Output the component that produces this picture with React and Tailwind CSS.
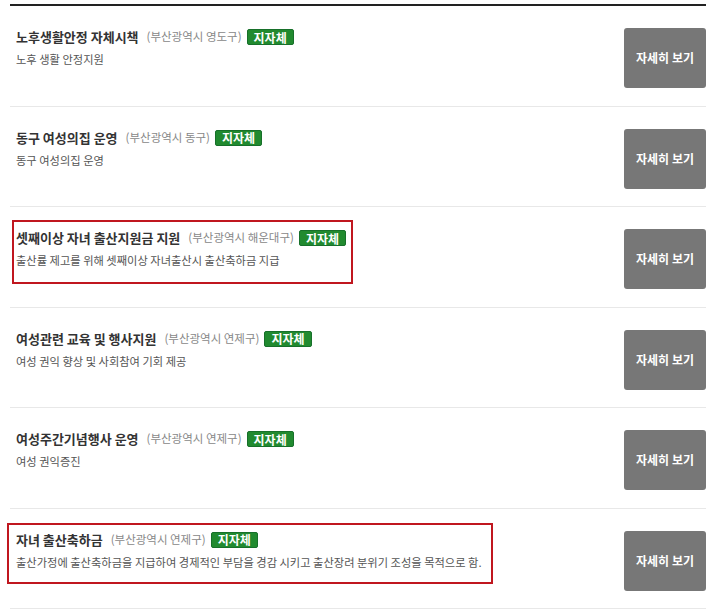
import React from "react";

const items = [
  { title: "노후생활안정 자체시책", region: "(부산광역시 영도구)", desc: "노후 생활 안정지원" },
  { title: "동구 여성의집 운영", region: "(부산광역시 동구)", desc: "동구 여성의집 운영" },
  {
    title: "셋째이상 자녀 출산지원금 지원",
    region: "(부산광역시 해운대구)",
    desc: "출산률 제고를 위해 셋째이상 자녀출산시 출산축하금 지급",
    mark: "left-[2px] top-[13px] w-[341px] h-[64px]",
  },
  { title: "여성관련 교육 및 행사지원", region: "(부산광역시 연제구)", desc: "여성 권익 향상 및 사회참여 기회 제공" },
  { title: "여성주간기념행사 운영", region: "(부산광역시 연제구)", desc: "여성 권익증진" },
  {
    title: "자녀 출산축하금",
    region: "(부산광역시 연제구)",
    desc: "출산가정에 출산축하금을 지급하여 경제적인 부담을 경감 시키고 출산장려 분위기 조성을 목적으로 함.",
    mark: "left-[-3px] top-[14px] w-[486px] h-[61px]",
  },
];

const Row = ({ item }) => {
  return (
    <div className="relative h-[100.5px] border-b border-[#e8e8e8] flex items-start pt-[22px] pl-[6px]">
      {/* annotation box */}
      {item.mark && (
        <div className={`absolute border-2 border-[#c0171f] pointer-events-none ${item.mark}`}></div>
      )}

      <div className="flex-1 pt-[1px]">
        <div className="flex items-center gap-[5px] h-[16px]">
          <span className="text-[13px] font-bold text-[#333] mr-[3px]">{item.title}</span>
          <span className="text-[11.5px] text-[#888]">{item.region}</span>
          <span className="bg-[#218a2f] border border-[#17702a] rounded-[2px] text-white text-[12px] font-bold leading-[13px] px-[6px] h-[16px] flex items-center">
            지자체
          </span>
        </div>
        <div className="mt-[6px] text-[11.25px] text-[#555]">{item.desc}</div>
      </div>

      <button className="w-[82px] h-[60px] bg-[#777] rounded-[3px] text-white text-[12px] font-bold shrink-0">
        자세히 보기
      </button>
    </div>
  );
};

export default function App() {
  return (
    <div
      className="w-[720px] h-[611px] bg-white overflow-hidden pt-[4px]"
      style={{ fontFamily: '"Noto Sans CJK KR", "Noto Sans", sans-serif' }}
    >
      <div className="ml-[10px] w-[696px] border-t-2 border-[#222]">
        {items.map((item, i) => (
          <Row key={i} item={item} />
        ))}
      </div>
    </div>
  );
}
